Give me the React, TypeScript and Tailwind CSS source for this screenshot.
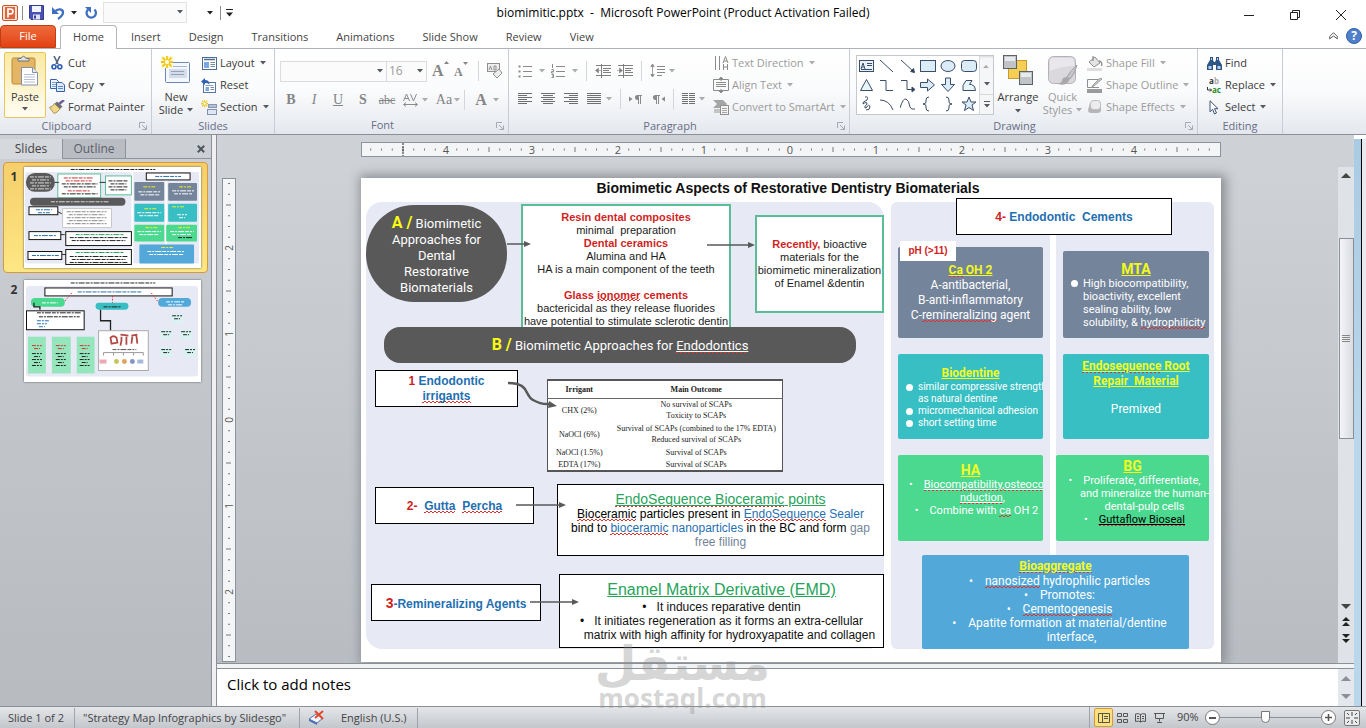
// src/App.tsx

import type { ReactNode } from "react";

/* ---------- small shared pieces ---------- */

const Caret = ({ dim = false }: { dim?: boolean }) => (
  <svg width="6" height="4" viewBox="0 0 6 4" className={dim ? "shrink-0 text-[#a9abae]" : "shrink-0 text-[#555a60]"}>
    <path d="M0 0h6L3 3.5z" fill="currentColor" />
  </svg>
);

const Sep = () => <span className="h-5 w-px shrink-0 bg-[#d3d6da]" />;

const Launcher = () => (
  <svg width="8" height="8" viewBox="0 0 8 8" fill="none" stroke="#a5a9af" className="shrink-0">
    <path d="M.5 6V.5H6M3 3l4 4M7.500 3.500v4h-4" />
  </svg>
);

/* red spell-check line, two offset rows of 2px dashes */
const Sp = ({ children }: { children: ReactNode }) => (
  <span className="bg-[image:repeating-linear-gradient(90deg,#e0322c_0_2px,transparent_2px_4px),repeating-linear-gradient(90deg,transparent_0_2px,#e0322c_2px_4px)] bg-[size:100%_1px,100%_1px] bg-[position:0_100%,0_calc(100%-1px)] bg-no-repeat">
    {children}
  </span>
);

type GroupProps = { label: string; width: string; launcher?: boolean; children: ReactNode };

const Group = ({ label, width, launcher = true, children }: GroupProps) => (
  <section className={`flex shrink-0 flex-col border-r border-[#c9cdd3] ${width}`}>
    <div className="flex flex-1 pt-[3px]">{children}</div>
    <div className="flex h-[17px] items-center px-1">
      <span className={`flex-1 text-center text-[11px] text-[#686d85] ${launcher ? "pr-2.5" : ""}`}>{label}</span>
      {launcher && <Launcher />}
    </div>
  </section>
);

type ItemProps = { icon: ReactNode; label: string; caret?: boolean; dim?: boolean };

const Item = ({ icon, label, caret = false, dim = false }: ItemProps) => (
  <button className={`flex h-[22px] items-center gap-[3px] text-[11px] whitespace-nowrap ${dim ? "text-[#9b9b9b]" : "text-[#3b3b3b]"}`}>
    <span className="flex w-4 justify-center">{icon}</span>
    {label}
    {caret && <span className="pl-0.5"><Caret dim={dim} /></span>}
  </button>
);

/* ---------- title bar ---------- */

const TitleBar = () => (
  <header className="relative flex h-[25px] items-center bg-white">
    <div className="flex items-center pl-0.5">
      <svg width="16" height="16" viewBox="0 0 16 16">
        <rect x=".5" y=".5" width="15" height="15" rx="1.500" fill="#fbe3d8" stroke="#c8532b" />
        <rect x="3" y="2" width="10" height="12" fill="#e0633a" />
        <path d="M6 12.500V4h2.500a2.300 2.300 0 0 1 0 4.800H6" fill="none" stroke="#fff" strokeWidth="1.700" />
      </svg>
      <span className="ml-1 h-3.5 w-px bg-[#8d8d8d]" />
      <button aria-label="Save" className="ml-1.5">
        <svg width="15" height="15" viewBox="0 0 15 15">
          <path d="M.5.5h14v14H2L.5 13z" fill="#4a52b5" stroke="#343a8e" />
          <rect x="3" y="1" width="9" height="6" fill="#f3f5fc" />
          <rect x="4" y="9.500" width="7" height="5" fill="#dfe3f1" />
          <rect x="5" y="10.500" width="2" height="3" fill="#343a8e" />
        </svg>
      </button>
      <button aria-label="Undo" className="ml-2">
        <svg width="13" height="14" viewBox="0 0 13 14" fill="none" stroke="#3f6fc0" strokeWidth="2.300">
          <path d="M3 5.500C6 2 11 3 11 6.500 11 9.500 8 11.500 6 13" />
          <path d="M0 1v7h7z" fill="#3f6fc0" stroke="none" />
        </svg>
      </button>
      <span className="ml-1.5"><svg width="6" height="4" viewBox="0 0 6 4"><path d="M0 0h6L3 3.500z" fill="#222" /></svg></span>
      <button aria-label="Redo" className="ml-2">
        <svg width="13" height="14" viewBox="0 0 13 14" fill="none" stroke="#3f6fc0" strokeWidth="2.300">
          <path d="M9.500 3.500a4.700 4.700 0 1 1-6.500 0" />
          <path d="M0 1h6v6z" fill="#3f6fc0" stroke="none" />
        </svg>
      </button>
      <div className="relative ml-[5px]">
        <select aria-label="Quick font" className="block h-[21px] w-[84px] appearance-none border border-[#e3e3e3] bg-[#fafafa]">
          <option></option>
        </select>
        <span className="pointer-events-none absolute top-2 right-1 flex"><Caret /></span>
      </div>
      <span className="ml-5"><svg width="6" height="4" viewBox="0 0 6 4"><path d="M0 0h6L3 3.500z" fill="#222" /></svg></span>
      <span className="ml-[7px] h-3.5 w-px bg-[#8d8d8d]" />
      <button aria-label="Customize" className="ml-[5px]">
        <svg width="7" height="8" viewBox="0 0 7 8" fill="#222"><path d="M0 0h7v1H0zM0 3.500h7L3.500 7.500z" /></svg>
      </button>
    </div>
    <h1 className="pointer-events-none absolute inset-x-0 text-center text-xs text-black">
      biomimitic.pptx&nbsp; -&nbsp; Microsoft PowerPoint (Product Activation Failed)
    </h1>
    <div className="ml-auto flex items-center gap-9 pt-1 pr-5">
      <button aria-label="Minimize"><svg width="10" height="10" viewBox="0 0 10 10"><path d="M0 5.500h10" stroke="#222" /></svg></button>
      <button aria-label="Restore">
        <svg width="10" height="10" viewBox="0 0 10 10" fill="none" stroke="#222"><path d="M.5 2.500h7v7h-7zM2.500 2.500v-2h7v7h-2" /></svg>
      </button>
      <button aria-label="Close"><svg width="10" height="10" viewBox="0 0 10 10"><path d="M0 0l10 10M10 0L0 10" stroke="#222" /></svg></button>
    </div>
  </header>
);

const tabs = ["Insert", "Design", "Transitions", "Animations", "Slide Show", "Review", "View"];

const TabBar = () => (
  <nav className="flex h-6 items-end border-b border-[#aeb3b9] bg-white text-[11px] text-[#444]">
    <button className="h-[23px] w-14 rounded-t border border-[#c43c12] bg-linear-to-b from-[#ee6a3b] to-[#e2410f] text-white">File</button>
    <button className="-mb-px ml-1 h-6 w-[57px] rounded-t border border-b-0 border-[#b3b6ba] bg-white">Home</button>
    {tabs.map((t) => (
      <button key={t} className="h-[22px] px-3.5">{t}</button>
    ))}
    <div className="ml-auto flex h-6 items-center gap-2 pr-1">
      <button aria-label="Collapse ribbon">
        <svg width="9" height="8" viewBox="0 0 9 8" fill="#fff" stroke="#555"><path d="M4.500.7L8.300 4.500v2.300L4.500 4 .7 6.800V4.500z" /></svg>
      </button>
      <button aria-label="Help" className="flex h-4 w-4 items-center justify-center rounded-full border border-[#2f5da8] bg-[#4f80cc] text-xs font-bold text-white">?</button>
    </div>
  </nav>
);

/* ---------- ribbon icons ---------- */

const PasteIcon = () => (
  <svg width="28" height="32" viewBox="0 0 28 32">
    <rect x="1" y="3" width="23" height="26" rx="1.500" fill="#e4b565" stroke="#b98a3c" />
    <path d="M7 6V3.500h3Q12.500-1 15 3.500h3V6z" fill="#dfe3e8" stroke="#6d7278" />
    <path d="M10.500 12.500h11l5 5v12.500h-16z" fill="#fff" stroke="#8390a8" />
    <path d="M21.500 12.500v5h5" fill="#e5ebf5" stroke="#8390a8" />
    <path d="M13 19.500h11M13 22h11M13 24.500h11M13 27h11" stroke="#b3bfd5" />
  </svg>
);

const CutIcon = () => (
  <svg width="12" height="14" viewBox="0 0 12 14" fill="none">
    <path d="M3 0l4 8M9 0L5 8" stroke="#52637e" strokeWidth="1.600" />
    <circle cx="3" cy="10.800" r="2" stroke="#2a5bb0" strokeWidth="1.600" />
    <circle cx="8.800" cy="10.800" r="2" stroke="#2a5bb0" strokeWidth="1.600" />
  </svg>
);

const CopyIcon = () => (
  <svg width="15" height="13" viewBox="0 0 15 13" stroke="#38619f">
    <path d="M.5.5h6l2 2v7h-8z" fill="#eef4fc" />
    <path d="M2 3.500h4M2 5.500h4M2 7.500h4" stroke="#7e9ed0" />
    <path d="M6.500 3.500h5.500l2.500 2.500v6.500h-8z" fill="#dceafb" />
    <path d="M8 7.500h5M8 9.500h5" stroke="#5f88c8" />
  </svg>
);

const PainterIcon = () => (
  <svg width="16" height="14" viewBox="0 0 16 14">
    <path d="M15 0l-5 4" stroke="#6d5f95" strokeWidth="2.500" />
    <path d="M8 1.500l5.500 5-2.500 2.500-5.500-5z" fill="#6f6f78" />
    <path d="M5.500 3.500l5.500 5.500Q8 13 5 13.500L.5 7.500Q3.500 7 5.500 3.500z" fill="#f1d98a" stroke="#8d7336" strokeWidth=".7" />
  </svg>
);

const Burst = () => (
  <path d="M6 0v4M6 8v4M0 6h4M8 6h4M1.500 1.500l3 3M7.500 7.500l3 3M10.500 1.500l-3 3M4.500 7.500l-3 3" stroke="#f2c718" strokeWidth="1.800" />
);

const NewSlideIcon = () => (
  <svg width="30" height="28" viewBox="0 0 30 28">
    <rect x="4.500" y="6.500" width="24" height="20" rx="1" fill="#f4f7fc" stroke="#6f87b3" />
    <path d="M12 10.500h14" stroke="#a8b4cb" />
    <rect x="8" y="13" width="18" height="9" fill="#d5ddeb" />
    <path d="M10 15.500h13M10 18.500h13" stroke="#93a1bd" />
    <rect x="0" y="0" width="12" height="12" fill="#fff8d6" />
    <Burst />
  </svg>
);

const LayoutIcon = () => (
  <svg width="15" height="13" viewBox="0 0 15 13">
    <rect x=".5" y=".5" width="14" height="12" fill="#fff" stroke="#4c6b95" />
    <path d="M2 2.500h11" stroke="#4c6b95" strokeWidth="1.500" />
    <rect x="2" y="5" width="5" height="6" fill="#7da7de" />
    <path d="M8.500 5.500H13M8.500 7.500H13M8.500 9.500H13" stroke="#7388a5" />
  </svg>
);

const ResetIcon = () => (
  <svg width="16" height="15" viewBox="0 0 16 15">
    <rect x="2.500" y="4.500" width="12" height="10" fill="#fff" stroke="#5b779f" />
    <path d="M4.500 7.500h8" stroke="#8da0bc" />
    <rect x="4.500" y="9" width="3.500" height="4" fill="#7da7de" />
    <path d="M9.500 9.500h3.500M9.500 11.500h3.500" stroke="#7388a5" />
    <path d="M0 3.500L4 0v2q4.500 0 4.500 4.500Q7 4.500 4 5v2z" fill="#2e62b4" />
  </svg>
);

const SectionIcon = () => (
  <svg width="16" height="15" viewBox="0 0 16 15">
    <rect x="6.500" y="9.500" width="9" height="5" fill="#dfe6f1" stroke="#7f93b3" />
    <rect x="7.500" y="4.500" width="8" height="3" fill="#b5c0d3" stroke="#8797b2" />
    <g transform="scale(.6)"><Burst /></g>
  </svg>
);

const ListIcon = ({ kind }: { kind: "bullet" | "number" }) => (
  <svg width="15" height="14" viewBox="0 0 15 14">
    <path d="M5 2.500h9M5 7.500h9M5 12.500h9" stroke="#8a8a8a" />
    {kind === "bullet" ? (
      <path d="M.5 2.500h2M.5 7.500h2M.5 12.500h2" stroke="#8a8a8a" strokeWidth="2" />
    ) : (
      <path d="M1.500 0v4M.5 5.500h2v2h-2v1.500h2M.5 10.500h2v3h-2M1 12h1" stroke="#8a8a8a" fill="none" />
    )}
  </svg>
);

const IndentIcon = ({ right = false }: { right?: boolean }) => (
  <svg width="16" height="14" viewBox="0 0 16 14">
    <path d="M1 1.500h15M8 4.500h8M8 6.500h6M8 8.500h8M1 11.500h15M6.500 0v14" stroke="#7f7f7f" />
    <path d={right ? "M0 6.500h3M2.500 4L5.500 6.500 2.500 9z" : "M6 6.500H3M3.500 4L.5 6.500 3.500 9z"} fill="#7f7f7f" stroke="#7f7f7f" strokeWidth=".5" />
  </svg>
);

const SpacingIcon = () => (
  <svg width="15" height="15" viewBox="0 0 15 15" stroke="#8a8a8a" fill="#8a8a8a">
    <path d="M2.500 2v11M.8 3.500L2.500 1l1.700 2.500zM.8 11.500L2.500 14l1.700-2.500z" strokeWidth=".8" />
    <path d="M7 3.500h8M7 6.500h8M7 9.500h8M7 12.500h5" />
  </svg>
);

const AlignIcon = ({ d }: { d: string }) => (
  <svg width="14" height="12" viewBox="0 0 14 12"><path d={d} stroke="#6f6f6f" /></svg>
);

const aligns = [
  { name: "Align left", d: "M0 .5h14M0 2.500h9M0 4.500h14M0 6.500h9M0 8.500h14M0 10.500h9" },
  { name: "Center", d: "M0 .5h14M2 2.500h10M0 4.500h14M2 6.500h10M0 8.500h14M2 10.500h10" },
  { name: "Align right", d: "M0 .5h14M5 2.500h9M0 4.500h14M5 6.500h9M0 8.500h14M5 10.500h9" },
];

const PilcrowIcon = ({ flip = false }: { flip?: boolean }) => (
  <svg width="13" height="9" viewBox="0 0 13 9" fill="#8a8a8a">
    <path d={flip ? "M13 1.500v5L9.500 4z" : "M0 1.500v5L3.500 4z"} />
    <path d={flip ? "M3 0h5v1H7v8H6V1H5v8H4V5a2.500 2.500 0 0 1-1-5z" : "M8 0h5v1h-1v8h-1V1h-1v8H9V5a2.500 2.500 0 0 1-1-5z"} />
  </svg>
);

const ColumnsIcon = () => (
  <svg width="13" height="12" viewBox="0 0 13 12">
    <path d="M0 .5h6M0 2.500h6M0 4.500h6M0 6.500h6M0 8.500h6M0 10.500h6M7 .5h6M7 2.500h6M7 4.500h6M7 6.500h6M7 8.500h6M7 10.500h6" stroke="#6f6f6f" />
  </svg>
);

const TextDirIcon = () => (
  <svg width="15" height="15" viewBox="0 0 15 15" fill="none" stroke="#8a8a8a">
    <path d="M1.500 0v14M5.500 0v14M9.500 8v6M13.500 8v6M9 7l2.500-6.500L14 7M10 5h3M9.500 11h4" />
  </svg>
);

const AlignTextIcon = () => (
  <svg width="16" height="16" viewBox="0 0 16 16" fill="none" stroke="#8a8a8a">
    <path d="M.5 2.500h15v11H.5zM3 5.500h10M3 7.500h10M3 9.500h10M8 0v4M8 12v4" />
    <path d="M6 2L8 0l2 2zM6 14l2 2 2-2z" fill="#8a8a8a" />
  </svg>
);

const SmartArtIcon = () => (
  <svg width="16" height="15" viewBox="0 0 16 15">
    <path d="M0 0h10l4 4-3 4H0l4-4z" fill="#a5a5a5" />
    <path d="M1 9h6v4H1z" fill="#c4c4c4" />
    <rect x="7.500" y="5.500" width="8" height="9" fill="#f4f4f4" stroke="#8f8f8f" />
    <path d="M9 8.500h5M9 10.500h5M9 12.500h5" stroke="#a5a5a5" />
  </svg>
);

const galleryShapes: ReactNode[] = [
  <><rect x=".5" y="2.500" width="14" height="11" fill="#e9f2fb" /><path d="M2 11l2-6 2 6M3 9h2M8 5.500h5M8 7.500h5M2 11.500h11" /></>,
  <path d="M1 2l13 12" />,
  <><path d="M1 2l13 12" /><path d="M14.500 14.500l-1-4-3 3z" fill="#2f3d52" /></>,
  <rect x=".5" y="2.500" width="15" height="11" fill="#dcebf8" />,
  <ellipse cx="8" cy="8" rx="7" ry="5.500" fill="#dcebf8" />,
  <rect x=".5" y="2.500" width="15" height="11" rx="3" fill="#dcebf8" />,
  <path d="M7.500 2.500l6 11h-12z" fill="#e9f4f8" />,
  <path d="M1 3.500h6v10h7" />,
  <><path d="M1 3.500h6v9h6" /><path d="M15 12.500l-3-2.500v5z" fill="#2f3d52" /></>,
  <path d="M.5 5.500h7V2l7 6-7 6v-3.500h-7z" fill="#dcebf8" />,
  <path d="M5.500 1h5v6.500h4L8 14.500 1.500 7.500h4z" fill="#dcebf8" />,
  <path d="M2 13.500V8.500l3-5h6l-2.500 4h2q4 1 4 6z" fill="#e9f4f8" />,
  <path d="M6 1q4-1 2 3-5 2-4 4 4-3 4 0-4 4-1 4 3-5 4-1 0 3-4 3" />,
  <path d="M1 4q9 0 13 10" />,
  <path d="M0 12Q3 2 6 3t4 8q1 3 5 2" />,
  <path d="M9 1Q6 1 6 4v2q0 2-3 2 3 0 3 2v2q0 3 3 3" />,
  <path d="M6 1q3 0 3 3v2q0 2 3 2-3 0-3 2v2q0 3-3 3" />,
  <path d="M8 1l2 5h5l-4 3 1.500 5.500L8 11.500 3.500 14.500 5 9 1 6h5z" fill="#dcebf8" />,
];

const ArrangeIcon = () => (
  <svg width="30" height="30" viewBox="0 0 30 30">
    <rect x="5.500" y="5.500" width="18" height="18" fill="#f6cf52" stroke="#c99a2d" />
    <rect x=".5" y=".5" width="13" height="13" fill="#c0c3c8" stroke="#5c6067" />
    <rect x="16.500" y="16.500" width="13" height="13" fill="#c0c3c8" stroke="#5c6067" />
    <path d="M2 2h10v4H2zM18 18h10v4H18z" fill="#e8eaec" />
  </svg>
);

const QuickIcon = () => (
  <svg width="31" height="31" viewBox="0 0 31 31">
    <rect x="1.500" y="1.500" width="27" height="27" rx="5" fill="#dad8dc" stroke="#b4b2b6" />
    <path d="M5 3h20q2 0 2 8-12 0-24 5V6q0-3 2-3z" fill="#e9e7eb" />
    <path d="M30 10Q22 17 20 22l3 2q5-5 7-14z" fill="#c4c4c6" stroke="#a3a3a5" />
    <path d="M20 22q-5 0-5 4-2 3-4 3 8 3 12-5z" fill="#a9a9ab" />
  </svg>
);

const FillIcon = () => (
  <svg width="16" height="15" viewBox="0 0 16 15">
    <path d="M2 6l6-5 5 6-6 4z" fill="#e3e3e3" stroke="#8f8f8f" />
    <path d="M6 0v5M12 5q4 1 2.500 5" stroke="#8f8f8f" fill="none" strokeWidth="1.300" />
    <rect y="12" width="15" height="3" fill="#dedede" />
  </svg>
);

const OutlineIcon = () => (
  <svg width="16" height="15" viewBox="0 0 16 15">
    <path d="M11 1.500H.5v8H12" fill="none" stroke="#8f8f8f" />
    <path d="M15 1L7 8l-2 1 1-2 7-7z" fill="#c5c5c5" stroke="#858585" strokeWidth=".7" />
    <rect y="11" width="15" height="4" fill="#9a9a9a" />
  </svg>
);

const EffectsIcon = () => (
  <svg width="16" height="14" viewBox="0 0 16 14">
    <path d="M3 3h11v7q0 3-4 3H4q-3 0-3-3z" fill="#b5b5b8" />
    <rect x="3.500" y=".5" width="10" height="9" rx="3" fill="#ececee" stroke="#bdbdbf" />
  </svg>
);

const FindIcon = () => (
  <svg width="15" height="13" viewBox="0 0 15 13" fill="#2f5587">
    <path d="M3 0h3v3l1 2h1l1-2V0h3v3l3 5v5H9V8H6v5H0V8l3-5z" />
    <path d="M1.500 9h3v3h-3zM10.500 9h3v3h-3zM4 1h1v2H4zM10 1h1v2h-1z" fill="#b9d2f0" />
  </svg>
);

const ReplaceIcon = () => (
  <span className="flex flex-col text-[8px] leading-[9px] font-bold">
    <span className="text-[#333]">a<span className="text-[#aaa]">b</span></span>
    <span className="flex items-center text-[#1f8a2c]">
      <svg width="5" height="5" viewBox="0 0 5 5" fill="none" stroke="#333"><path d="M.5 0v3h4M3 1.500L4.500 3 3 4.500" /></svg>
      ac
    </span>
  </span>
);

const SelectIcon = () => (
  <svg width="10" height="15" viewBox="0 0 10 15"><path d="M1 .8v11l2.600-2.500L5.500 14l2-1-2-4.300H9z" fill="#fff" stroke="#3c5374" /></svg>
);

/* ---------- ribbon ---------- */

const fmt = "flex h-6 items-center justify-center font-['Liberation_Serif',serif] text-sm text-[#858585]";

const Ribbon = () => (
  <div className="flex h-[86px] overflow-hidden border-b border-[#8b9097] bg-linear-to-b from-white via-[#fafbfc] to-[#e4e8ee]">
    <Group label="Clipboard" width="w-[152px]">
      <button className="ml-1 flex h-[66px] w-[42px] flex-col items-center rounded-xs border border-[#e8c65b] bg-linear-to-b from-[#fbe9a4] to-[#fffdf3] pt-0.5 text-[11px] text-[#3b3b3b]">
        <PasteIcon />
        <span className="leading-5">Paste</span>
        <Caret />
      </button>
      <div className="ml-[3px] flex flex-col">
        <Item icon={<CutIcon />} label="Cut" />
        <Item icon={<CopyIcon />} label="Copy" caret />
        <Item icon={<PainterIcon />} label="Format Painter" />
      </div>
    </Group>

    <Group label="Slides" width="w-[123px]" launcher={false}>
      <button className="ml-1 flex w-10 flex-col items-center pt-1 text-[11px] leading-[13px] text-[#3b3b3b]">
        <NewSlideIcon />
        <span className="pt-1.5">New</span>
        <span className="flex items-center gap-1">Slide <Caret /></span>
      </button>
      <div className="ml-[5px] flex flex-col">
        <Item icon={<LayoutIcon />} label="Layout" caret />
        <Item icon={<ResetIcon />} label="Reset" />
        <Item icon={<SectionIcon />} label="Section" caret />
      </div>
    </Group>

    <Group label="Font" width="w-[234px]">
      <div className="flex flex-1 flex-col gap-1.5 pt-2 pl-[5px]">
        <div className="flex items-center">
          <div className="relative">
            <select aria-label="Font" className="block h-[21px] w-[107px] appearance-none border border-[#d9dbde] bg-[#fbfbfb]">
              <option></option>
            </select>
            <span className="pointer-events-none absolute top-2 right-1 flex"><Caret /></span>
          </div>
          <div className="relative">
            <select aria-label="Font size" className="block h-[21px] w-10 appearance-none border border-l-0 border-[#d9dbde] bg-[#fbfbfb] pl-0.5 text-xs text-[#9b9b9b]">
              <option>16</option>
            </select>
            <span className="pointer-events-none absolute top-2 right-1 flex"><Caret /></span>
          </div>
          <button aria-label="Grow font" className="ml-[5px] flex w-4 items-start font-['Liberation_Serif',serif] text-base leading-5 font-bold text-[#858585]">
            A<svg width="5" height="4" viewBox="0 0 5 4" className="shrink-0"><path d="M0 3h5L2.500 0z" fill="#858585" /></svg>
          </button>
          <button aria-label="Shrink font" className="ml-1.5 flex w-4 items-start pt-0.5 font-['Liberation_Serif',serif] text-xs leading-5 font-bold text-[#858585]">
            A<svg width="5" height="4" viewBox="0 0 5 4" className="shrink-0"><path d="M0 0h5L2.500 3z" fill="#858585" /></svg>
          </button>
          <span className="mx-2 flex"><Sep /></span>
          <button aria-label="Clear formatting">
            <svg width="16" height="16" viewBox="0 0 16 16" fill="#eee" stroke="#8f8f8f">
              <rect x=".5" y=".5" width="12" height="8" />
              <path d="M2 7l1.500-4L5 7M7 3v4h2V3zM6 11l6-5 3 4-5 5z" />
            </svg>
          </button>
        </div>
        <div className="flex items-center">
          <button className={`${fmt} w-[22px] font-bold`}>B</button>
          <button className={`${fmt} w-6 italic`}>I</button>
          <button className={`${fmt} w-6 underline`}>U</button>
          <button className={`${fmt} w-[26px] font-bold`}>S</button>
          <button className={`${fmt} w-[22px] line-through`}><span className="text-xs">abc</span></button>
          <button aria-label="Character spacing" className="flex w-[34px] items-center justify-center gap-1">
            <svg width="15" height="14" viewBox="0 0 15 14" fill="none" stroke="#8a8a8a">
              <path d="M.5 8l3-7 3 7M1.500 5.500h4M7.500 1l3 7 3-7M1 11.500h13M3 9.500l-2.500 2L3 13.500M12 9.500l2.500 2-2.500 2" />
            </svg>
            <Caret dim />
          </button>
          <button className={`${fmt} w-8 gap-0.5`}>Aa<Caret dim /></button>
          <Sep />
          <button aria-label="Font color" className={`${fmt} ml-1.5 w-8 gap-1.5`}><span className="text-base font-bold">A</span><Caret dim /></button>
        </div>
      </div>
    </Group>

    <Group label="Paragraph" width="w-[341px]">
      <div className="flex w-[202px] flex-col gap-1.5 pt-2 pl-[9px]">
        <div className="flex h-[21px] items-center">
          <button aria-label="Bullets" className="flex items-center gap-1.5"><ListIcon kind="bullet" /><Caret dim /></button>
          <button aria-label="Numbering" className="ml-1.5 flex items-center gap-1.5"><ListIcon kind="number" /><Caret dim /></button>
          <span className="mx-2 flex"><Sep /></span>
          <button aria-label="Decrease indent"><IndentIcon /></button>
          <button aria-label="Increase indent" className="ml-1.5"><IndentIcon right /></button>
          <span className="mx-2 flex"><Sep /></span>
          <button aria-label="Line spacing" className="flex items-center gap-1"><SpacingIcon /><Caret dim /></button>
        </div>
        <div className="flex h-6 items-center">
          <div className="flex gap-[9px]">
            {aligns.map((a) => (
              <button key={a.name} aria-label={a.name}><AlignIcon d={a.d} /></button>
            ))}
            <button aria-label="Justify" className="flex items-center gap-[5px]">
              <AlignIcon d="M0 .5h14M0 2.500h14M0 4.500h14M0 6.500h14M0 8.500h14M0 10.500h14" />
              <Caret dim />
            </button>
          </div>
          <span className="mx-2 flex"><Sep /></span>
          <button aria-label="Left to right"><PilcrowIcon /></button>
          <button aria-label="Right to left" className="ml-2.5"><PilcrowIcon flip /></button>
          <span className="mx-2 flex"><Sep /></span>
          <button aria-label="Columns" className="flex items-center gap-1"><ColumnsIcon /><Caret dim /></button>
        </div>
      </div>
      <div className="flex flex-col pl-0.5">
        <Item icon={<TextDirIcon />} label="Text Direction" caret dim />
        <Item icon={<AlignTextIcon />} label="Align Text" caret dim />
        <Item icon={<SmartArtIcon />} label="Convert to SmartArt" caret dim />
      </div>
    </Group>

    <Group label="Drawing" width="w-[348px]">
      <div className="mt-[3px] ml-1.5 flex h-[60px] w-[138px] border border-[#c5c9ce] bg-white">
        <div className="grid flex-1 grid-cols-6">
          {galleryShapes.map((shape, i) => (
            <button key={i} aria-label={`Shape ${i + 1}`} className="flex items-center justify-center">
              <svg width="16" height="16" viewBox="0 0 16 16" fill="none" stroke="#3a4d69">{shape}</svg>
            </button>
          ))}
        </div>
        <div className="grid w-3.5 grid-rows-3 divide-y divide-[#d5d8dc] border-l border-[#d5d8dc] bg-[#f5f6f8]">
          <button aria-label="Shapes up" className="flex rotate-180 items-center justify-center"><Caret dim /></button>
          <button aria-label="Shapes down" className="flex items-center justify-center"><Caret /></button>
          <button aria-label="More shapes" className="flex flex-col items-center justify-center gap-0.5"><span className="h-px w-1.5 bg-[#555a60]" /><Caret /></button>
        </div>
      </div>
      <button className="ml-0.5 flex w-11 flex-col items-center pt-[3px] text-[11px] text-[#3b3b3b]">
        <ArrangeIcon />
        <span className="leading-6">Arrange</span>
        <Caret />
      </button>
      <button className="flex w-[45px] flex-col items-center pt-[3px] text-[11px] leading-[13px] text-[#9b9b9b]">
        <QuickIcon />
        <span className="pt-1">Quick</span>
        <span className="flex items-center gap-1">Styles <Caret dim /></span>
      </button>
      <div className="ml-0.5 flex flex-col">
        <Item icon={<FillIcon />} label="Shape Fill" caret dim />
        <Item icon={<OutlineIcon />} label="Shape Outline" caret dim />
        <Item icon={<EffectsIcon />} label="Shape Effects" caret dim />
      </div>
    </Group>

    <Group label="Editing" width="w-[85px]" launcher={false}>
      <div className="flex flex-col pl-2">
        <Item icon={<FindIcon />} label="Find" />
        <Item icon={<ReplaceIcon />} label="Replace" caret />
        <Item icon={<SelectIcon />} label="Select" caret />
      </div>
    </Group>
  </div>
);

/* ---------- slide thumbnails ---------- */

/* rows of dashes standing in for unreadable text */
const Dashes = ({ x, y, w, n, step = 3, color = "#222" }: { x: number; y: number; w: number; n: number; step?: number; color?: string }) => (
  <g stroke={color} strokeDasharray="4 1 2 1 6 1">
    {Array.from({ length: n }, (_, i) => (
      <path key={i} d={`M${x + (i % 2) * 2} ${y + i * step}h${w - (i % 2) * 4}`} />
    ))}
  </g>
);

const ThumbOne = () => (
  <svg viewBox="0 0 178 102" className="block w-full bg-white">
    <rect x="1" y="5" width="107" height="92" rx="3" fill="#e7e9f4" />
    <rect x="110" y="5" width="32" height="92" fill="#e7e9f4" />
    <rect x="144" y="5" width="32" height="92" fill="#e7e9f4" />
    <Dashes x={47} y={2.5} w={85} n={1} />
    <rect x="2" y="6" width="29" height="19" rx="9" fill="#595959" />
    <Dashes x={6} y={10} w={21} n={5} color="#ddd" />
    <rect x="34" y="7" width="43" height="24" fill="#fff" stroke="#5bbd95" />
    <Dashes x={40} y={11} w={30} n={2} color="#c33" />
    <Dashes x={38} y={17} w={36} n={2} />
    <Dashes x={44} y={24} w={22} n={1} color="#c33" />
    <Dashes x={38} y={27} w={36} n={1} />
    <rect x="82" y="9" width="26" height="19" fill="#fff" stroke="#5bbd95" />
    <Dashes x={85} y={14} w={20} n={4} />
    <path d="M31 15.500h4M76 15.500h6M30 43l8 4M35 68h6M38 88h6" stroke="#333" />
    <rect x="6" y="31" width="96" height="8" rx="4" fill="#595959" />
    <Dashes x={27} y={35} w={58} n={1} color="#ddd" />
    <rect x="5" y="40" width="29" height="8" fill="#fff" stroke="#111" />
    <Dashes x={12} y={43} w={16} n={2} color="#2171b5" />
    <rect x="39" y="42" width="49" height="19" fill="#fff" stroke="#aaa" strokeWidth=".6" />
    <Dashes x={43} y={45} w={40} n={5} color="#888" />
    <rect x="5" y="65" width="32" height="8" fill="#fff" stroke="#111" />
    <Dashes x={10} y={69} w={22} n={1} color="#2171b5" />
    <rect x="42" y="65" width="66" height="14" fill="#fff" stroke="#111" />
    <Dashes x={52} y={68} w={48} n={1} color="#27a35a" />
    <Dashes x={46} y={71} w={58} n={2} />
    <rect x="4" y="85" width="34" height="8" fill="#fff" stroke="#111" />
    <Dashes x={8} y={89} w={27} n={1} color="#2171b5" />
    <rect x="42" y="83" width="66" height="15" fill="#fff" stroke="#111" />
    <Dashes x={52} y={86} w={48} n={1} color="#27a35a" />
    <Dashes x={46} y={90} w={58} n={3} />
    <rect x="123" y="6" width="44" height="7" fill="#fff" stroke="#111" />
    <Dashes x={132} y={9.5} w={26} n={1} color="#2171b5" />
    <rect x="111" y="15" width="30" height="19" rx="1" fill="#74849b" />
    <rect x="145" y="16" width="29" height="18" rx="1" fill="#74849b" />
    <rect x="111" y="37" width="30" height="18" rx="1" fill="#37bfc3" />
    <rect x="145" y="37" width="29" height="18" rx="1" fill="#37bfc3" />
    <rect x="111" y="58" width="30" height="17" rx="1" fill="#4ad98f" />
    <rect x="143" y="58" width="31" height="17" rx="1" fill="#4ad98f" />
    <rect x="116" y="78" width="55" height="19" rx="1" fill="#52a8d9" />
    {[[120, 20], [156, 20], [121, 42], [149, 40], [122, 61], [155, 61], [138, 81]].map(([x, y]) => (
      <Dashes key={`${x}-${y}`} x={x} y={y} w={12} n={1} color="#f2f21c" />
    ))}
    {[[115, 25, 23], [149, 24, 22], [114, 46, 24], [154, 48, 10], [114, 65, 24], [147, 65, 24], [124, 85, 38]].map(([x, y, w]) => (
      <Dashes key={`${x}-${y}`} x={x} y={y} w={w} n={2} color="#fff" />
    ))}
    <Dashes x={155} y={71} w={15} n={1} />
  </svg>
);

const ThumbTwo = () => (
  <svg viewBox="0 0 178 102" className="block w-full bg-white">
    <rect x="2" y="6" width="173" height="91" rx="3" fill="#e7e9f4" />
    <Dashes x={47} y={3} w={85} n={1} />
    <rect x="21" y="8" width="128" height="8" fill="#fff" stroke="#111" />
    <Dashes x={54} y={12} w={65} n={1} color="#2171b5" />
    <path d="M48 13L38 25M89 16v7M128 13l10 13" stroke="#d33" strokeDasharray="1.500 1.500" />
    <rect x="7" y="18" width="34" height="9" rx="4" fill="#4ad98f" />
    <rect x="72" y="23" width="33" height="7" rx="3.500" fill="#37bfc3" />
    <rect x="135" y="18" width="33" height="9" rx="4" fill="#52a8d9" />
    <Dashes x={18} y={23} w={16} n={1} color="#fff" />
    <Dashes x={80} y={27} w={17} n={1} />
    <Dashes x={143} y={22} w={18} n={2} color="#fff" />
    <path d="M10 23v4h6v3M77 30v11h10v10" stroke="#222" fill="none" strokeWidth="1.300" />
    <rect x="2.500" y="31" width="58" height="19" fill="#fff" stroke="#111" />
    <Dashes x={13} y={33} w={45} n={2} step={4} />
    <Dashes x={13} y={41} w={12} n={1} color="#2171b5" />
    <Dashes x={13} y={44} w={10} n={2} color="#2171b5" />
    <rect x="4" y="57" width="18" height="37" fill="#96e6bd" />
    <rect x="28" y="57" width="19" height="37" fill="#96e6bd" />
    <rect x="53" y="57" width="18" height="37" fill="#96e6bd" />
    {[8, 32, 56].map((x) => (
      <g key={x}>
        <Dashes x={x} y={66} w={10} n={2} color="#c33" />
        <Dashes x={x} y={74} w={10} n={5} />
      </g>
    ))}
    <rect x="75" y="51" width="50" height="40" fill="#fff" stroke="#aaa" />
    <path d="M87 58q3-3 6 0l1 5-6 1zM97 55l8 1M98 57v4l-1 5M103 57v8M108 56l6-1M109 57l-1 7M113 56l1 8" stroke="#b04a46" strokeWidth="1.800" fill="none" />
    <path d="M80 76v-3h40v3M90 73v3M100 73v3M110 73v3" stroke="#999" fill="none" />
    <Dashes x={89} y={70} w={24} n={1} color="#555" />
    <rect x="76" y="80" width="7" height="4" fill="#eda8b1" />
    <circle cx="93" cy="82" r="2.500" fill="#c5c55a" />
    <circle cx="101" cy="82" r="2.500" fill="#e0a35a" />
    <circle cx="109" cy="82" r="2.500" fill="#8494c4" />
    <rect x="114" y="80" width="6" height="4" fill="#a9b9dd" />
    {[[149, 36], [138, 52], [158, 52], [138, 70], [162, 70]].map(([x, y]) => (
      <g key={`${x}-${y}`}>
        <rect x={x - 1} y={y - 2} width="12" height="9" fill="#d8f3f2" />
        <Dashes x={x} y={y} w={10} n={2} />
      </g>
    ))}
  </svg>
);

const SlidePane = () => (
  <aside className="flex w-[212px] shrink-0 flex-col border-r border-[#8b9097] bg-linear-to-b from-[#ccd0d5] to-[#b7bbc0]">
    <div className="mt-1 flex h-5 items-stretch text-xs text-[#444]">
      <button className="w-[62px] bg-[#d5d8dc]">Slides</button>
      <button className="w-16 border border-t-0 border-[#8f949b] bg-[#b9bdc3] text-[#5a5f66]">Outline</button>
      <div className="flex flex-1 items-center justify-end border-b border-[#8f949b] pr-1.5">
        <button aria-label="Close pane">
          <svg width="8" height="8" viewBox="0 0 8 8"><path d="M.8.8l6.400 6.400M7.200.8L.8 7.200" stroke="#4f555c" strokeWidth="2" /></svg>
        </button>
      </div>
    </div>
    <ol className="flex flex-col gap-1.5 px-[3px] pt-[3px] text-xs font-bold text-[#333]">
      <li className="flex rounded-sm border border-[#d79a3b] bg-linear-to-b from-[#f5cf6b] to-[#fde784] py-1 pr-1.5">
        <span className="w-5 pt-0.5 text-center">1</span>
        <div className="flex-1 shadow-[0_0_2px_#555]"><ThumbOne /></div>
      </li>
      <li className="flex border border-transparent pr-1.5">
        <span className="w-5 pt-0.5 text-center">2</span>
        <div className="flex-1 shadow-[0_0_2px_#555]"><ThumbTwo /></div>
      </li>
    </ol>
  </aside>
);

/* ---------- rulers ---------- */

const UNIT = 86;
const marks = [-4, -3, -2, -1, 0, 1, 2, 3, 4];

const HorizontalRuler = () => (
  <div className="mt-[7px] border border-[#8d939b] bg-[#f4f5f7]">
    <svg width="858" height="13" viewBox="0 0 858 13" className="block">
      {Array.from({ length: 79 }, (_, i) => i - 39)
        .filter((i) => i % 8 !== 0)
        .map((i) => {
          const x = 428 + (i * UNIT) / 8;
          return <path key={i} d={i % 4 === 0 ? `M${x} 4v5` : `M${x} 5.500v2`} stroke="#777" />;
        })}
      {marks.map((m) => (
        <text key={m} x={428 + m * UNIT} y="10.500" textAnchor="middle" fontSize="11" fill="#555">{Math.abs(m)}</text>
      ))}
      <path d="M41 0v13" stroke="#222" strokeDasharray="2 1" />
    </svg>
  </div>
);

const VerticalRuler = () => (
  <div className="mt-[43px] ml-[5px] shrink-0 self-start border border-[#8d939b] bg-[#f4f5f7]">
    <svg width="12" height="482" viewBox="0 0 12 482" className="block">
      {Array.from({ length: 45 }, (_, i) => i - 22)
        .filter((i) => i % 8 !== 0)
        .map((i) => {
          const y = 241 + (i * UNIT) / 8;
          return <path key={i} d={i % 4 === 0 ? `M3 ${y}h5` : `M5 ${y}h2`} stroke="#777" />;
        })}
      {marks.slice(2, 7).map((m) => (
        <text key={m} transform={`translate(9.500 ${241 + m * UNIT}) rotate(-90)`} textAnchor="middle" fontSize="10" fill="#555">{Math.abs(m)}</text>
      ))}
    </svg>
  </div>
);

/* ---------- the slide ---------- */

const NoteBox = ({ place, children }: { place: string; children: ReactNode }) => (
  <div className={`absolute flex flex-col items-center justify-center border border-black bg-white whitespace-nowrap ${place}`}>{children}</div>
);

const Card = ({ place, children }: { place: string; children: ReactNode }) => (
  <div className={`absolute flex flex-col items-center overflow-hidden rounded-xs text-center font-[Roboto,sans-serif] whitespace-nowrap text-white ${place}`}>{children}</div>
);

const CardTitle = ({ children, big = false }: { children: ReactNode; big?: boolean }) => (
  <h3 className={`font-bold text-[#f2fa1e] underline ${big ? "text-sm leading-4" : "text-xs leading-[15px]"}`}>{children}</h3>
);

const DotItem = ({ children }: { children: ReactNode }) => (
  <li className="flex gap-[5px]">
    <span className="mt-[3px] h-[7px] w-[7px] shrink-0 rounded-full bg-white" />
    <span>{children}</span>
  </li>
);

const outcomes = [
  ["CHX (2%)", "No survival of SCAPs", "Toxicity to SCAPs"],
  ["NaOCl (6%)", "Survival of SCAPs (combined to the 17% EDTA)", "Reduced survival of SCAPs"],
  ["NaOCl (1.5%)", "Survival of SCAPs"],
  ["EDTA (17%)", "Survival of SCAPs"],
];

const IrrigantTable = () => (
  <table className="absolute top-[201px] left-[186px] h-[93px] w-[236px] border border-t-2 border-b-2 border-[#555] bg-white text-center font-['Liberation_Serif',serif] text-[8px] leading-[11px] whitespace-nowrap text-[#222]">
    <thead>
      <tr className="h-[18px] border-b border-[#666]">
        <th className="w-[63px]">Irrigant</th>
        <th>Main Outcome</th>
      </tr>
    </thead>
    <tbody>
      {outcomes.map(([irrigant, first, second]) => (
        <tr key={irrigant}>
          <td className="p-0">{irrigant}</td>
          <td className="p-0">
            {first}
            {second && <span className="block">{second}</span>}
          </td>
        </tr>
      ))}
    </tbody>
  </table>
);

const Arrows = () => (
  <svg className="pointer-events-none absolute inset-0" width="860" height="484" viewBox="0 0 860 484" fill="none" stroke="#595959">
    <path d="M146 66h17M346 67h41M155 327h43M169 424h42" strokeWidth="1.500" />
    <path d="M147 205c22 0 16 12 25 17s12 4 17 4" strokeWidth="2.500" />
    <path d="M163 63l7 3-7 3zM387 64l7 3-7 3zM198 324l7 3-7 3zM211 421l7 3-7 3zM188 223l8 5-9 2z" fill="#595959" stroke="none" />
  </svg>
);

const Slide = () => (
  <div className="relative h-[484px] w-[860px] shrink-0 overflow-hidden bg-white font-['Liberation_Sans',sans-serif]">
    <div className="absolute top-6 left-[5px] h-[447px] w-[518px] rounded-2xl bg-[#e7e9f4]" />
    <div className="absolute top-6 left-[530px] h-[447px] w-[159px] rounded-md bg-[#e7e9f4]" />
    <div className="absolute top-6 left-[695px] h-[447px] w-[158px] rounded-md bg-[#e7e9f4]" />

    <h2 className="absolute top-0.5 left-0 w-[854px] text-center text-sm leading-4 font-bold text-[#111]">
      Biomimetic Aspects of Restorative Dentistry Biomaterials
    </h2>

    {/* part A */}
    <div className="absolute top-[27px] left-[5px] flex h-[97px] w-[141px] flex-col items-center justify-center rounded-[48px] bg-[#595959] pt-1 text-center font-[Roboto,sans-serif] text-[13px] leading-4 whitespace-nowrap text-white">
      <p><b className="text-base leading-4 text-[#fbfb14]">A&nbsp;/</b> Biomimetic</p>
      <p>Approaches for</p>
      <p>Dental</p>
      <p>Restorative</p>
      <p>Biomaterials</p>
    </div>
    <div className="absolute top-[26px] left-40 flex h-[126px] w-[210px] flex-col items-center border-2 border-[#5bbd95] bg-white pt-[5px] text-center text-[11px] leading-[13px] whitespace-nowrap text-[#1c1c1c]">
      <b className="text-[#d11f1f]">Resin dental composites</b>
      <p>minimal&nbsp; preparation</p>
      <b className="text-[#d11f1f]">Dental ceramics</b>
      <p>Alumina and HA</p>
      <p>HA is a main component of the teeth</p>
      <p>&nbsp;</p>
      <b className="text-[#d11f1f]">Glass <Sp>ionomer</Sp> cements</b>
      <p>bactericidal as they release fluorides</p>
      <p>have potential to stimulate sclerotic dentin</p>
    </div>
    <div className="absolute top-[37px] left-[394px] flex h-[98px] w-[129px] flex-col items-center justify-center border-2 border-[#5bbd95] bg-white text-center text-[11px] leading-[13px] whitespace-nowrap text-[#1c1c1c]">
      <p><b className="text-[#d11f1f]">Recently,</b> bioactive</p>
      <p>materials for the</p>
      <p>biomimetic mineralization</p>
      <p>of Enamel &amp;dentin</p>
    </div>

    {/* part B */}
    <div className="absolute top-[149px] left-[23px] flex h-9 w-[472px] items-center justify-center rounded-2xl bg-[#595959] font-[Roboto,sans-serif] text-[13px] whitespace-nowrap text-white">
      <p><b className="text-base text-[#fbfb14]">B /</b> Biomimetic Approaches for <span className="underline"><Sp>Endodontics</Sp></span></p>
    </div>

    <NoteBox place="top-[192px] left-[14px] h-[37px] w-[143px] text-xs leading-[15px] font-bold text-[#1f6fb2]">
      <p><span className="text-[#d11f1f]">1</span> Endodontic</p>
      <p><Sp>irrigants</Sp></p>
    </NoteBox>
    <IrrigantTable />

    <NoteBox place="top-[309px] left-[14px] h-[37px] w-[159px] text-xs font-bold text-[#1f6fb2]">
      <p><span className="text-[#d11f1f]">2-</span>&nbsp; <Sp>Gutta</Sp>&nbsp; <Sp>Percha</Sp></p>
    </NoteBox>
    <NoteBox place="top-[306px] left-[196px] h-[72px] w-[327px] text-xs leading-[14px] text-black">
      <h3 className="text-sm leading-4 text-[#27a35a] underline"><Sp>EndoSequence Bioceramic</Sp> points</h3>
      <p><Sp>Bioceramic</Sp> particles present in <span className="text-[#1f6fb2]"><Sp>EndoSequence</Sp> Sealer</span></p>
      <p>bind to <span className="text-[#1f6fb2]"><Sp>bioceramic</Sp> nanoparticles</span> in the BC and form <span className="text-[#74849b]">gap</span></p>
      <p className="text-[#74849b]">free filling</p>
    </NoteBox>

    <NoteBox place="top-[406px] left-2.5 h-[37px] w-[170px] text-xs font-bold text-[#1f6fb2]">
      <p><span className="text-sm text-[#d11f1f]">3</span>-Remineralizing Agents</p>
    </NoteBox>
    <NoteBox place="top-[396px] left-[198px] h-[74px] w-[325px] text-xs leading-[14px] text-[#111]">
      <h3 className="text-base leading-5 text-[#27a35a] underline">Enamel Matrix Derivative (EMD)</h3>
      <ul className="text-center">
        <li>•&nbsp;&nbsp; It induces reparative dentin</li>
        <li>•&nbsp;&nbsp; It initiates regeneration as it forms an extra-cellular</li>
        <li className="pl-4">matrix with high affinity for hydroxyapatite and collagen</li>
      </ul>
    </NoteBox>

    {/* cements */}
    <Card place="top-[69px] left-[537px] h-[91px] w-[145px] bg-[#74849b] pt-4 text-xs leading-[15px]">
      <CardTitle><Sp>Ca</Sp> OH 2</CardTitle>
      <p>A-antibacterial,</p>
      <p>B-anti-inflammatory</p>
      <p>C-<Sp>remineralizing</Sp> agent</p>
    </Card>
    <Card place="top-[73px] left-[702px] h-[87px] w-[146px] bg-[#74849b] pt-2.5 text-[11px] leading-[13px]">
      <CardTitle big>MTA</CardTitle>
      <ul className="self-start pl-2 text-left">
        <DotItem>High biocompatibility,<br />bioactivity, excellent<br />sealing ability, low<br />solubility, &amp; <Sp>hydrophilicity</Sp></DotItem>
      </ul>
    </Card>
    <Card place="top-[176px] left-[537px] h-[85px] w-[145px] bg-[#37bfc3] pt-3 text-[10px] leading-3">
      <CardTitle>Biodentine</CardTitle>
      <ul className="self-start pl-2 text-left">
        <DotItem>similar compressive strength<br />as natural dentine</DotItem>
        <DotItem>micromechanical adhesion</DotItem>
        <DotItem>short setting time</DotItem>
      </ul>
    </Card>
    <Card place="top-[176px] left-[702px] h-[85px] w-[146px] bg-[#37bfc3] pt-[5px] text-xs">
      <CardTitle><Sp>Endosequence</Sp> Root<br />Repair&nbsp; Material</CardTitle>
      <p className="pt-3">Premixed</p>
    </Card>
    <Card place="top-[277px] left-[537px] h-[86px] w-[145px] bg-[#4ad98f] pt-[7px] text-[11px] leading-[13px]">
      <CardTitle big>HA</CardTitle>
      <ul className="pl-3">
        <li>•&nbsp;&nbsp;&nbsp; <span className="underline"><Sp>Biocompatibility,osteoco</Sp></span></li>
        <li className="pl-3"><span className="underline"><Sp>nduction</Sp></span>,</li>
        <li>•&nbsp;&nbsp;&nbsp; Combine with <Sp>ca</Sp> OH 2</li>
      </ul>
    </Card>
    <Card place="top-[277px] left-[695px] h-[86px] w-[153px] bg-[#4ad98f] pt-[3px] text-[11px] leading-[13px]">
      <CardTitle big>BG</CardTitle>
      <ul className="pl-1">
        <li>•&nbsp;&nbsp;&nbsp; Proliferate, differentiate,</li>
        <li className="pl-5">and mineralize the human-</li>
        <li className="pl-5">dental-pulp cells</li>
        <li>•&nbsp;&nbsp;&nbsp; <span className="text-black underline"><Sp>Guttaflow Bioseal</Sp></span></li>
      </ul>
    </Card>
    <Card place="top-[377px] left-[561px] h-[94px] w-[267px] bg-[#52a8d9] pt-1 text-xs leading-[14px]">
      <CardTitle><Sp>Bioaggregate</Sp></CardTitle>
      <ul className="pl-2">
        <li>•&nbsp;&nbsp;&nbsp; <Sp>nanosized</Sp> hydrophilic particles</li>
        <li>•&nbsp;&nbsp;&nbsp; Promotes:</li>
        <li>•&nbsp;&nbsp;&nbsp; <Sp>Cementogenesis</Sp></li>
        <li>•&nbsp;&nbsp;&nbsp; Apatite formation at material/dentine</li>
        <li className="pl-6">interface,</li>
      </ul>
    </Card>
    <p className="absolute top-[63px] left-[539px] h-5 w-14 bg-white text-center text-[10px] leading-5 font-bold text-[#d11f1f]">pH (&gt;11)</p>
    <NoteBox place="top-5 left-[595px] h-[37px] w-[216px] text-xs font-bold text-[#1f6fb2]">
      <p><span className="text-[#d11f1f]">4-</span> Endodontic&nbsp; Cements</p>
    </NoteBox>

    <Arrows />
  </div>
);

/* ---------- editor ---------- */

const ScrollBar = () => (
  <div className="mt-8 flex w-4 shrink-0 flex-col items-center bg-[#dfe2e7]">
    <button aria-label="Scroll up" className="flex h-[17px] items-center"><svg width="10" height="5" viewBox="0 0 10 5"><path d="M0 5h10L5 0z" fill="#444" /></svg></button>
    <div className="mt-[54px] flex h-[201px] w-[15px] flex-col items-center justify-center gap-px border border-[#8b9097] bg-linear-to-r from-[#f4f5f9] to-[#d9dce1]">
      <span className="h-px w-2 bg-[#888]" />
      <span className="h-px w-2 bg-[#888]" />
      <span className="h-px w-2 bg-[#888]" />
      <span className="h-px w-2 bg-[#888]" />
    </div>
    <div className="mt-auto flex flex-col items-center gap-2 pb-5">
      <button aria-label="Scroll down"><svg width="10" height="5" viewBox="0 0 10 5" className="block"><path d="M0 0h10L5 5z" fill="#444" /></svg></button>
      <button aria-label="Previous slide"><svg width="8" height="9" viewBox="0 0 8 9" className="block"><path d="M0 4h8L4 0zM0 9h8L4 5z" fill="#222" /></svg></button>
      <button aria-label="Next slide"><svg width="8" height="9" viewBox="0 0 8 9" className="block"><path d="M0 0h8L4 4zM0 5h8L4 9z" fill="#222" /></svg></button>
    </div>
  </div>
);

const Editor = () => (
  <div className="flex min-w-0 flex-1 flex-col border-l border-[#8b9097]">
    <div className="flex min-h-0 flex-1 overflow-hidden border-b border-[#8b9097] bg-linear-to-b from-[#cfd2d6] to-[#b9bdc2]">
      <VerticalRuler />
      <div className="flex min-w-0 flex-1 flex-col items-center pl-2">
        <HorizontalRuler />
        <div className="mt-[21px] shadow-[2px_0_10px_3px_#8b8f94]"><Slide /></div>
      </div>
      <ScrollBar />
    </div>
    <div className="h-[5px] border-b border-[#8b9097] bg-[#f1f3f5]" />
    <div className="flex h-[37px] bg-white">
      <textarea aria-label="Notes" className="flex-1 resize-none bg-white px-2.5 pt-1 text-[15px] text-black outline-none" defaultValue="Click to add notes" />
      <div className="flex w-4 flex-col items-center justify-around bg-[#e4e7eb]">
        <svg width="10" height="5" viewBox="0 0 10 5"><path d="M0 5h10L5 0z" fill="#8b9097" /></svg>
        <svg width="10" height="5" viewBox="0 0 10 5"><path d="M0 0h10L5 5z" fill="#8b9097" /></svg>
      </div>
    </div>
    <div className="pointer-events-none absolute top-[636px] left-[600px] flex w-[165px] flex-col items-center font-bold text-[#8c8c8c] opacity-35">
      <span lang="ar" className="h-[50px] font-['DejaVu_Sans',sans-serif] text-5xl leading-[54px]">مستقل</span>
      <span className="text-[26px] leading-6">mostaql.com</span>
    </div>
  </div>
);

/* ---------- status bar ---------- */

const StatusBar = () => (
  <footer className="flex h-[22px] items-center border-t border-[#8b9097] bg-linear-to-b from-[#e4e6e9] to-[#c3c7cc] text-[11px] whitespace-nowrap text-[#444]">
    <span className="w-[75px] border-r border-[#9fa4aa] pl-2 leading-5">Slide 1 of 2</span>
    <span className="w-[225px] border-r border-[#9fa4aa] pl-2 leading-5">"Strategy Map Infographics by Slidesgo"</span>
    <button aria-label="Spelling" className="ml-2 w-8">
      <svg width="17" height="15" viewBox="0 0 17 15">
        <path d="M1 9l7-5 7 4-6 5z" fill="#f1f5fb" stroke="#5274ad" />
        <path d="M1 9v2l8 4v-2z" fill="#4a70b3" />
        <path d="M7 1l8 8M15 1L7 8" stroke="#e2492c" strokeWidth="2" />
      </svg>
    </button>
    <span className="w-[78px] border-r border-[#9fa4aa] pl-px leading-5">English (U.S.)</span>
    <div className="ml-auto flex h-full items-center border-l border-[#9fa4aa] pr-1.5 pl-1">
      <button aria-label="Normal view" className="flex h-[19px] w-[19px] items-center justify-center rounded-xs border border-[#d9993b] bg-[#fbe07e]">
        <svg width="12" height="10" viewBox="0 0 12 10" fill="none" stroke="#555"><path d="M.5.5h11v9H.5zM4.500.5v9M6 3.500h4M6 5.500h4" /></svg>
      </button>
      <button aria-label="Slide sorter" className="ml-1"><svg width="11" height="10" viewBox="0 0 11 10" fill="none" stroke="#555"><path d="M.5.5h4v3h-4zM6.500.5h4v3h-4zM.5 6.500h4v3h-4zM6.500 6.500h4v3h-4z" /></svg></button>
      <button aria-label="Reading view" className="ml-[7px]"><svg width="11" height="10" viewBox="0 0 11 10" fill="none" stroke="#555"><path d="M.5 1q3-1 5 .5 2-1.500 5-.5v7.500q-3-1-5 .5-2-1.500-5-.5zM5.500 1.500V9M2 3.500h2M2 5.500h2M7 3.500h2M7 5.500h2" /></svg></button>
      <button aria-label="Slide show" className="ml-2"><svg width="11" height="10" viewBox="0 0 11 10" fill="none" stroke="#555"><path d="M0 .5h11M1.500.5v5h8v-5M5.500 5.500v3M3 9.500h5" /></svg></button>
      <button className="ml-3 w-7 text-left">90%</button>
      <button aria-label="Zoom out" className="flex h-[15px] w-[15px] items-center justify-center rounded-full border border-[#777] bg-white"><span className="h-0.5 w-[7px] bg-[#555]" /></button>
      <input
        type="range"
        aria-label="Zoom"
        defaultValue={45}
        className="h-3 w-[101px] appearance-none bg-transparent [&::-webkit-slider-runnable-track]:h-px [&::-webkit-slider-runnable-track]:bg-[#8b9097] [&::-webkit-slider-thumb]:-mt-1.5 [&::-webkit-slider-thumb]:h-3 [&::-webkit-slider-thumb]:w-[9px] [&::-webkit-slider-thumb]:appearance-none [&::-webkit-slider-thumb]:rounded-b-full [&::-webkit-slider-thumb]:border [&::-webkit-slider-thumb]:border-[#777] [&::-webkit-slider-thumb]:bg-white"
      />
      <button aria-label="Zoom in" className="flex h-[15px] w-[15px] items-center justify-center rounded-full border border-[#777] bg-white">
        <svg width="7" height="7" viewBox="0 0 7 7"><path d="M3.500 0v7M0 3.500h7" stroke="#555" strokeWidth="1.500" /></svg>
      </button>
      <button aria-label="Fit to window" className="ml-2 flex h-4 w-4 items-center justify-center rounded-xs border border-[#777] bg-[#e9ebed]">
        <svg width="12" height="12" viewBox="0 0 12 12"><path d="M6 0v4M6 8v4M0 6h4M8 6h4M1 1l2 2M11 1L9 3M1 11l2-2M11 11L9 9" stroke="#444" /></svg>
      </button>
    </div>
  </footer>
);

const App = () => {
  return (
    <div className="relative flex h-screen flex-col overflow-hidden bg-white font-['Open_Sans',sans-serif]">
      <TitleBar />
      <TabBar />
      <Ribbon />
      <main className="flex min-h-0 flex-1">
        <SlidePane />
        <div className="w-1 bg-[#eef0f3]" />
        <Editor />
        <div className="flex w-3 shrink-0 pt-1">
          <div className="w-[7px] bg-linear-to-b from-[#a9cbe4] via-[#b9d6ea] to-[#b9d6ea]" />
          <div className="w-px bg-black" />
          <div className="flex-1 bg-[#e8eaf0]" />
        </div>
      </main>
      <StatusBar />
    </div>
  );
};

export default App;
